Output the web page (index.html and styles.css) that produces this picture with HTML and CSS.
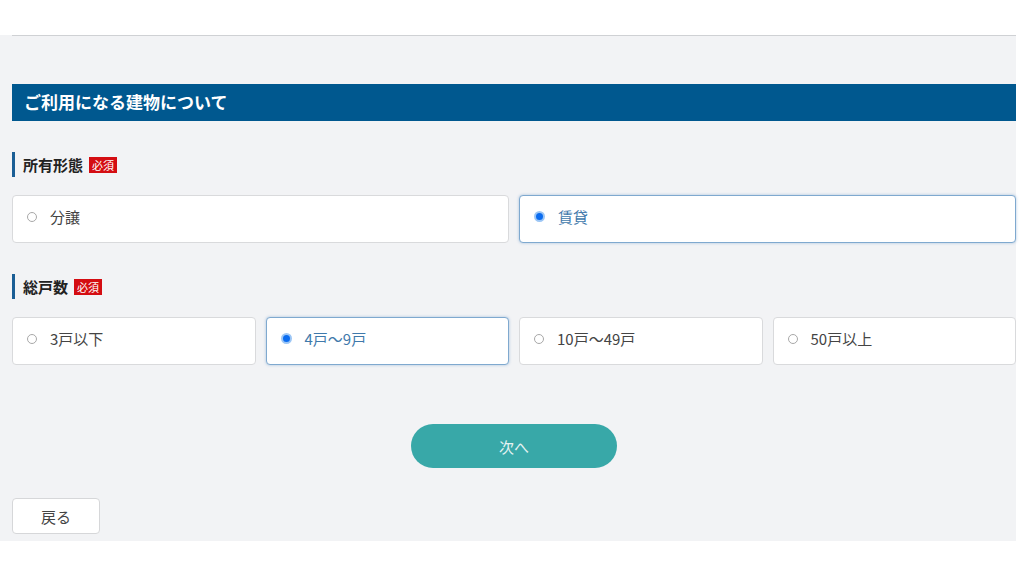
FILE: index.html
```html
<!DOCTYPE html>
<html lang="ja">
<head>
  <meta charset="UTF-8">
  <title>ご利用になる建物について</title>
  <link rel="stylesheet" href="styles.css">
</head>
<body>

  <div class="page">
    <div class="inner">
      <h2 class="section-title">ご利用になる建物について</h2>

      <div class="field">
        <div class="label">所有形態 <span class="req">必須</span></div>
        <div class="options cols-2">
          <label class="opt"><span class="dot"></span>分譲</label>
          <label class="opt on"><span class="dot"></span>賃貸</label>
        </div>
      </div>

      <div class="field">
        <div class="label">総戸数 <span class="req">必須</span></div>
        <div class="options cols-4">
          <label class="opt"><span class="dot"></span>3戸以下</label>
          <label class="opt on"><span class="dot"></span>4戸～9戸</label>
          <label class="opt"><span class="dot"></span>10戸～49戸</label>
          <label class="opt"><span class="dot"></span>50戸以上</label>
        </div>
      </div>

      <div class="actions">
        <button class="next">次へ</button>
      </div>

      <button class="back">戻る</button>
    </div>
  </div>

</body>
</html>
```

FILE: styles.css
```css
body {
  margin: 0;
  background: #fff;
  font-family: "Noto Sans CJK JP", "Noto Sans", sans-serif;
  color: #333;
}

.page {
  margin-top: 35px;
  width: 1016px;
  height: 506px;
  background: #f2f3f5;
}

.inner {
  margin-left: 12px;
  border-top: 1px solid #cfd1d4;
  padding-top: 48px;
}

.section-title {
  margin: 0;
  height: 37px;
  line-height: 35px;
  padding-left: 12px;
  background: #00588f;
  color: #fff;
  font-size: 17px;
  font-weight: bold;
}

.field {
  margin-top: 31px;
}

.label {
  display: flex;
  align-items: center;
  gap: 6px;
  height: 25px;
  padding-left: 8px;
  border-left: 3px solid #1a5e95;
  font-size: 15px;
  font-weight: bold;
  color: #222;
}

.req {
  display: inline-block;
  background: #d40d12;
  color: #fff;
  font-size: 11px;
  font-weight: normal;
  line-height: 16px;
  padding: 0 3px;
  margin-top: 1px;
}

.options {
  display: grid;
  gap: 10px;
  margin-top: 18px;
}

.cols-2 { grid-template-columns: 1fr 1fr; }
.cols-4 { grid-template-columns: repeat(4, 1fr); }

.opt {
  display: flex;
  align-items: center;
  height: 48px;
  box-sizing: border-box;
  padding: 0 0 5px 14px;
  background: #fff;
  border: 1px solid #d9dadc;
  border-radius: 4px;
  font-size: 15px;
  color: #444;
}

.dot {
  width: 8px;
  height: 8px;
  border: 1.5px solid #a8a8a8;
  border-radius: 50%;
  margin-right: 13px;
  background: #fff;
}

.opt.on {
  border-color: #7fa9cf;
  box-shadow: 0 0 3px rgba(70, 130, 190, 0.45);
  color: #3f79ab;
}

.opt.on .dot {
  border: 2px solid #9cc6f5;
  background: #0b6cf0;
  width: 7px;
  height: 7px;
}

.actions {
  display: flex;
  justify-content: center;
  margin-top: 59px;
}

.next {
  width: 206px;
  height: 44px;
  border: none;
  border-radius: 22px;
  background: #38a8a8;
  color: #e6f3f3;
  font-family: inherit;
  font-size: 15px;
  cursor: pointer;
}

.back {
  display: block;
  margin-top: 30px;
  width: 88px;
  height: 36px;
  background: #fff;
  border: 1px solid #d6d7d9;
  border-radius: 4px;
  font-family: inherit;
  font-size: 15px;
  color: #444;
  cursor: pointer;
}
```
